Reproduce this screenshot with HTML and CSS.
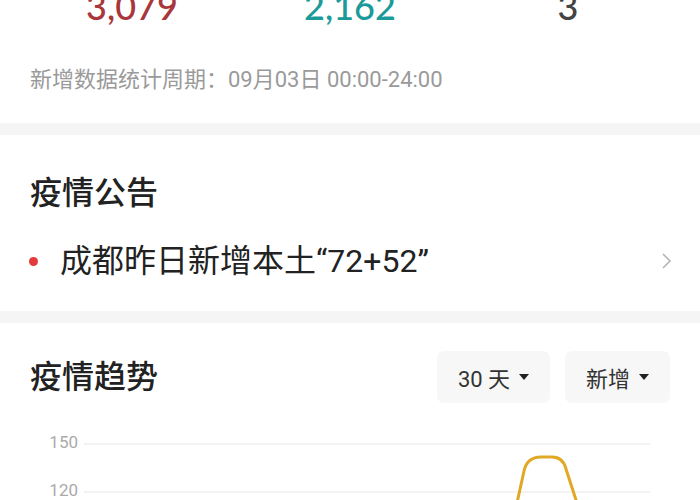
FILE: index.html
```html
<!DOCTYPE html>
<html lang="zh">
<head>
<meta charset="utf-8">
<link rel="stylesheet" href="styles.css">
</head>
<body>
<section class="stats">
  <div class="nums">
    <div class="num red">3,079</div>
    <div class="num teal">2,162</div>
    <div class="num dark">3</div>
  </div>
  <p class="period">新增数据统计周期：09月03日 00:00-24:00</p>
</section>
<div class="band"></div>
<section class="card notice">
  <h2 class="title">疫情公告</h2>
  <div class="item">
    <span class="dot"></span>
    <span class="item-text">成都昨日新增本土“72+52”</span>
    <svg class="chev" width="12" height="20" viewBox="0 0 12 20"><path d="M2 3 L9 10 L2 17" fill="none" stroke="#b5b5b5" stroke-width="1.6"/></svg>
  </div>
</section>
<div class="band"></div>
<section class="card trend">
  <div class="trend-head">
    <h2 class="title">疫情趋势</h2>
    <div class="btns">
      <div class="btn btn-days">30 天 <span class="caret"></span></div>
      <div class="btn btn-type">新增 <span class="caret"></span></div>
    </div>
  </div>
  <svg class="chart" width="700" height="90" viewBox="0 0 700 90">
    <line x1="84" y1="25" x2="650" y2="25" stroke="#efefef" stroke-width="1.5"/>
    <line x1="84" y1="73" x2="650" y2="73" stroke="#efefef" stroke-width="1.5"/>
    <text x="78" y="29" class="axis" text-anchor="end">150</text>
    <text x="78" y="77" class="axis" text-anchor="end">120</text>
    <path d="M517 84 L524 52 Q527 38 541 38 L552 38 Q563 38 566 50 L577 84" fill="none" stroke="#e0a825" stroke-width="3" stroke-linecap="round"/>
  </svg>
</section>
</body>
</html>
```
FILE: styles.css
```css
* { box-sizing: border-box; }
html, body { margin: 0; padding: 0; background: #fff; overflow: hidden; }
body {
  width: 700px;
  height: 500px;
  font-family: Roboto, "Noto Sans CJK SC", sans-serif;
  color: #222;
}
.stats { padding: 0 23px; }
.nums {
  display: grid;
  grid-template-columns: repeat(3, 1fr);
  margin-top: -14px;
}
.num {
  text-align: center;
  font-family: Lato, "Noto Sans", sans-serif;
  font-size: 36px;
  line-height: 40px;
  font-weight: 500;
}
.red { color: #a8363a; }
.teal { color: #1b9a9a; }
.dark { color: #444; }
.period {
  margin: 40px 0 0 7px;
  font-size: 22px;
  line-height: 28px;
  color: #9a9a9a;
}
.band {
  height: 12px;
  background: #f5f5f5;
  margin-top: 29px;
}
.card + .band { margin-top: 0; }
.notice { padding: 38px 30px 30px 30px; }
.title {
  margin: 0;
  font-size: 32px;
  line-height: 40px;
  font-weight: 500;
  color: #222;
}
.item {
  display: flex;
  align-items: center;
  margin-top: 28px;
  height: 40px;
}
.dot {
  width: 9px;
  height: 9px;
  border-radius: 50%;
  background: #e33b3b;
  margin-left: -1px;
  margin-right: 22px;
}
.item-text {
  font-size: 32px;
  line-height: 40px;
  color: #222;
  flex: 1;
}
.chev { margin-right: -3px; }
.trend { padding: 28px 0 0 0; }
.trend-head {
  display: flex;
  align-items: center;
  justify-content: space-between;
  padding: 0 30px;
}
.btns { display: flex; gap: 15px; }
.btn {
  height: 52px;
  background: #f7f7f7;
  border-radius: 7px;
  display: flex;
  align-items: center;
  justify-content: center;
  font-size: 22px;
  color: #333;
  gap: 9px;
}
.btn-days { width: 113px; }
.btn-type { width: 105px; }
.caret {
  width: 0;
  height: 0;
  border-left: 5px solid transparent;
  border-right: 5px solid transparent;
  border-top: 6px solid #222;
}
.chart { display: block; margin-top: 16px; }
.axis { font-family: Roboto, sans-serif; font-size: 17px; fill: #aaa; }
```
